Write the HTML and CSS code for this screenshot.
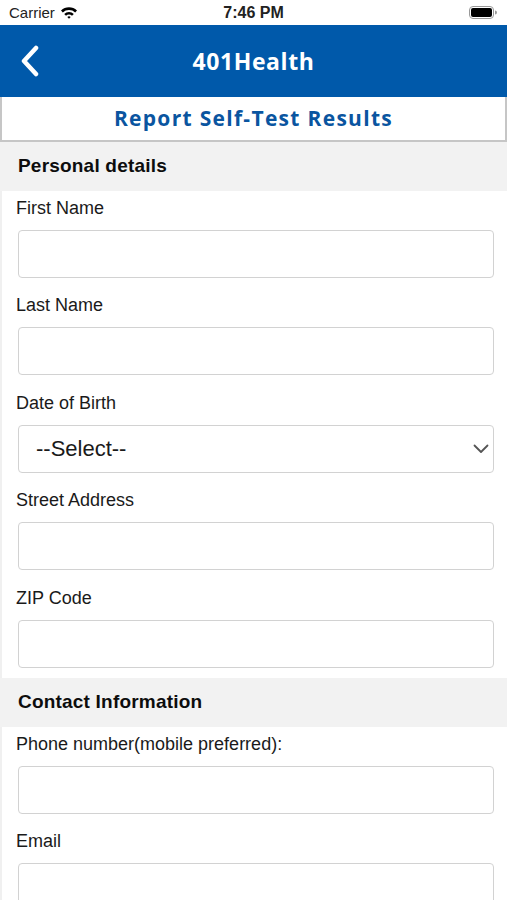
FILE: index.html
```html
<!DOCTYPE html>
<html lang="en">
<head>
    <meta charset="UTF-8">
    <meta name="viewport" content="width=device-width, initial-scale=1.0">
    <title>401Health - Report Self-Test Results</title>
    <link rel="stylesheet" href="styles.css">
</head>
<body>

<!-- Status bar -->
<div class="status-bar">
    <div class="carrier">
        Carrier
        <svg class="wifi" width="18" height="13" viewBox="0 0 18 13">
            <path d="M1 4.6 A11.5 11.5 0 0 1 17 4.6 L15.2 6.5 A9 9 0 0 0 2.8 6.5 Z" fill="#000"/>
            <path d="M4.2 7.9 A6.8 6.8 0 0 1 13.8 7.9 L12 9.8 A4.2 4.2 0 0 0 6 9.8 Z" fill="#000"/>
            <path d="M7.3 11 A2.4 2.4 0 0 1 10.7 11 L9 12.8 Z" fill="#000"/>
        </svg>
    </div>
    <div class="time">7:46 PM</div>
    <div class="battery">
        <svg width="28" height="13" viewBox="0 0 28 13">
            <rect x="0.5" y="0.5" width="24" height="12" rx="3.5" fill="none" stroke="#999"/>
            <rect x="2" y="2" width="21" height="9" rx="2" fill="#000"/>
            <path d="M26 4.5 a1.5 1.5 0 0 1 0 4 Z" fill="#999"/>
        </svg>
    </div>
</div>

<!-- Navigation bar -->
<div class="nav-bar">
    <svg class="back" width="22" height="32" viewBox="0 0 22 32">
        <path d="M17 3 L5 16 L17 29" fill="none" stroke="#fff" stroke-width="4.5" stroke-linecap="round" stroke-linejoin="round"/>
    </svg>
    <div class="nav-title">401Health</div>
</div>

<div class="page-title">Report Self-Test Results</div>

<!-- Personal details -->
<div class="section-head">Personal details</div>

<div class="field">
    <label>First Name</label>
    <div class="input"></div>
</div>
<div class="field">
    <label>Last Name</label>
    <div class="input"></div>
</div>
<div class="field">
    <label>Date of Birth</label>
    <div class="input select">
        <span>--Select--</span>
        <svg width="16" height="10" viewBox="0 0 16 10">
            <path d="M1.5 1.5 L8 8 L14.5 1.5" fill="none" stroke="#555" stroke-width="1.8" stroke-linecap="round" stroke-linejoin="round"/>
        </svg>
    </div>
</div>
<div class="field">
    <label>Street Address</label>
    <div class="input"></div>
</div>
<div class="field">
    <label>ZIP Code</label>
    <div class="input"></div>
</div>

<!-- Contact Information -->
<div class="section-head">Contact Information</div>

<div class="field">
    <label>Phone number(mobile preferred):</label>
    <div class="input"></div>
</div>
<div class="field">
    <label>Email</label>
    <div class="input"></div>
</div>

</body>
</html>
```

FILE: styles.css
```css
body {
    font-family: "Liberation Sans", Arial, sans-serif;
    margin: 0;
    background-color: #ffffff;
    color: #111111;
    overflow: hidden;
}
.status-bar {
    height: 25px;
    display: flex;
    align-items: center;
    justify-content: space-between;
    padding: 0 9px;
    font-size: 15px;
    position: relative;
}
.carrier {
    display: flex;
    align-items: center;
    gap: 5px;
    color: #222222;
}
.time {
    font-weight: bold;
    font-size: 16px;
    position: absolute;
    left: 0;
    right: 0;
    text-align: center;
    color: #222222;
}
.battery {
    display: flex;
    align-items: center;
    padding-right: 1px;
}
.nav-bar {
    height: 72px;
    background-color: #0059aa;
    display: flex;
    align-items: center;
    justify-content: center;
    position: relative;
}
.back {
    position: absolute;
    left: 19px;
    top: 20px;
}
.nav-title {
    color: #ffffff;
    font-family: "Open Sans", "Liberation Sans", sans-serif;
    font-weight: bold;
    font-size: 23px;
    letter-spacing: 0.6px;
}
.page-title {
    height: 43px;
    line-height: 43px;
    text-align: center;
    color: #0a55a0;
    font-family: "Open Sans", "Liberation Sans", sans-serif;
    font-weight: bold;
    font-size: 21px;
    letter-spacing: 1.3px;
    border: 2px solid #c6c6c6;
    border-top: none;
}
.section-head {
    background-color: #f2f2f2;
    height: 49px;
    line-height: 47px;
    padding-left: 18px;
    font-weight: bold;
    font-size: 19px;
    letter-spacing: 0.2px;
    color: #0d0d0d;
}
.field {
    padding: 6px 13px 10.4px 0;
    border-left: 2px solid #f0f0f0;
}
.field label {
    display: block;
    height: 22px;
    line-height: 22px;
    padding-left: 14px;
    font-size: 18px;
    color: #1a1a1a;
}
.input {
    height: 46px;
    margin: 11px 0 0 16px;
    border: 1px solid #d2d2d2;
    border-radius: 4px;
    background-color: #ffffff;
}
.select {
    display: flex;
    align-items: center;
    justify-content: space-between;
    padding: 0 4px 0 17px;
    font-size: 22px;
    color: #1a1a1a;
}
```
